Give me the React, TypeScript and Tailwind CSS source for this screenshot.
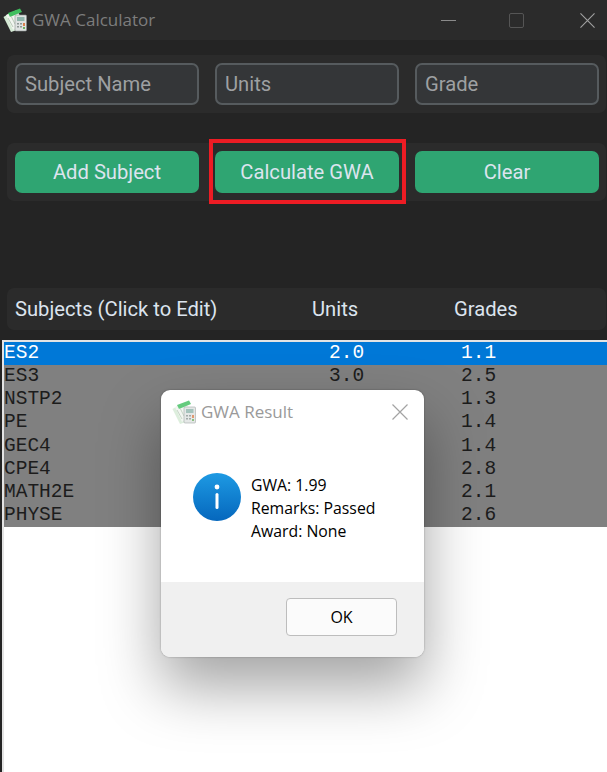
const ROWS = [
  { name: "ES2", units: "2.0", grade: "1.1" },
  { name: "ES3", units: "3.0", grade: "2.5" },
  { name: "NSTP2", units: "2.0", grade: "1.3" },
  { name: "PE", units: "2.0", grade: "1.4" },
  { name: "GEC4", units: "3.0", grade: "1.4" },
  { name: "CPE4", units: "3.0", grade: "2.8" },
  { name: "MATH2E", units: "3.0", grade: "2.1" },
  { name: "PHYSE", units: "4.0", grade: "2.6" },
];

function AppIcon({ className }: { className: string }) {
  return (
    <svg viewBox="0 0 24 24" className={className}>
      <path d="M0.5 9 L7 5 L14 22 L8 24 Z" fill="#d5ead5" />
      <path d="M3 7 L14 2 L20 14 L10 22 Z" fill="#f1f5f0" />
      <path d="M5 5 L17 0.5 L19 4 L7 9 Z" fill="#3fbf5f" />
      <path d="M5 10 L10 19 M8 8 L12 16" stroke="#b9cbb9" strokeWidth="1" />
      <rect x="12" y="7" width="11.5" height="16" rx="1" fill="#dfe3e2" stroke="#8d9694" strokeWidth="0.6" />
      <rect x="14" y="9" width="7.5" height="4" fill="#8fb5ac" />
      <rect x="14" y="15" width="2" height="1.5" fill="#8d9694" />
      <rect x="17" y="15" width="2" height="1.5" fill="#8d9694" />
      <rect x="20" y="15" width="2" height="3" fill="#d9824f" />
      <rect x="14" y="18" width="2" height="1.5" fill="#8d9694" />
      <rect x="17" y="18" width="2" height="1.5" fill="#8d9694" />
      <rect x="20" y="19" width="2" height="2" fill="#6fae62" />
    </svg>
  );
}

function CloseIcon({ className }: { className: string }) {
  return (
    <svg viewBox="0 0 16 16" className={className} fill="none" stroke="currentColor" strokeWidth="1.2">
      <path d="M0.5 0.5 L15.5 15.5 M15.5 0.5 L0.5 15.5" />
    </svg>
  );
}

function Field({ label }: { label: string }) {
  return (
    <div className="flex h-[42px] w-[184px] shrink-0 items-center rounded-[7px] border-2 border-[#565b5e] bg-[#343638] pl-2 font-['Roboto',sans-serif] text-[20.2px] text-[#9ea0a2]">
      {label}
    </div>
  );
}

function ActionButton({ label }: { label: string }) {
  return (
    <button className="h-[42px] w-[184px] shrink-0 rounded-[7px] bg-[#2fa572] font-['Roboto',sans-serif] text-[20.2px] text-[#dce4ee]">
      {label}
    </button>
  );
}

export default function App() {
  return (
    <div className="relative flex h-[772px] w-[607px] flex-col overflow-hidden bg-[#242424]">
      {/* Title bar */}
      <div className="flex h-10 shrink-0 items-center justify-between bg-[#2b2b2b]">
        <div className="flex items-center">
          <AppIcon className="ml-[3px] mr-[5px] h-6 w-6" />
          <span className="font-['Open_Sans',sans-serif] text-[17px] text-[#7d7d7d]">GWA Calculator</span>
        </div>
        <div className="flex items-center">
          <div className="mr-[53px] h-px w-[15px] bg-[#8a8a8a]" />
          <div className="mr-[56px] h-[15px] w-[15px] rounded-[2px] border border-[#555555]" />
          <CloseIcon className="mr-[12px] h-[15px] w-[15px] text-[#a0a0a0]" />
        </div>
      </div>

      <div className="ml-[7px] mr-px mt-[15px] flex gap-4 rounded-[7px] bg-[#2b2b2b] p-2">
        <Field label="Subject Name" />
        <Field label="Units" />
        <Field label="Grade" />
      </div>

      <div className="ml-[7px] mr-px mt-[30px] flex gap-4 rounded-[7px] bg-[#2b2b2b] p-2">
        <ActionButton label="Add Subject" />
        <ActionButton label="Calculate GWA" />
        <ActionButton label="Clear" />
      </div>

      <div className="ml-[7px] mr-px mt-[87px] flex h-[42px] items-center rounded-[7px] bg-[#2b2b2b] pl-2 font-['Roboto',sans-serif] text-[20.2px] text-[#dce4ee]">
        <span className="w-[297px]">Subjects (Click to Edit)</span>
        <span className="w-[142px]">Units</span>
        <span>Grades</span>
      </div>

      {/* Subject list */}
      <div className="ml-0.5 mt-[10px] flex-1 border-l-2 border-t-2 border-[#e3e3e3] bg-white">
        {ROWS.map((row, i) => (
          <div
            key={row.name}
            className={`flex h-[23.17px] items-center whitespace-pre font-['Liberation_Mono',monospace] text-[19.5px] ${
              i === 0 ? "bg-[#0078d7] text-white" : "bg-[#808080] text-[#1c1c1c]"
            }`}
          >
            <span className="w-[325px]">{row.name}</span>
            <span className="w-[132px]">{row.units}</span>
            <span>{row.grade}</span>
          </div>
        ))}
      </div>

      {/* Highlight around the Calculate GWA button */}
      <div className="absolute left-[209px] top-[139px] h-[65px] w-[197px] border-4 border-[#ed1c24]" />

      {/* Result dialog */}
      <div className="absolute left-[161px] top-[390px] flex h-[267px] w-[263px] flex-col overflow-hidden rounded-[9px] bg-white font-['Open_Sans',sans-serif] shadow-[0_0_2px_rgba(0,0,0,0.35),0_30px_60px_rgba(0,0,0,0.36)]">
        <div className="flex h-[43px] shrink-0 items-center justify-between">
          <div className="flex items-center">
            <AppIcon className="ml-[11px] mr-[5px] h-6 w-6 opacity-80" />
            <span className="text-[17px] text-[#9a9a9a]">GWA Result</span>
          </div>
          <CloseIcon className="mr-4 h-4 w-4 text-[#a3a3a3]" />
        </div>
        <div className="flex flex-1 items-start pl-8 pt-10">
          <svg viewBox="0 0 48 48" className="mr-[10px] h-12 w-12 shrink-0">
            <defs>
              <linearGradient id="info" x1="0" y1="0" x2="0" y2="1">
                <stop offset="0" stopColor="#1e9ae3" />
                <stop offset="1" stopColor="#0567bd" />
              </linearGradient>
            </defs>
            <circle cx="24" cy="24" r="24" fill="url(#info)" />
            <circle cx="24" cy="14" r="2.4" fill="#fff" />
            <rect x="22.5" y="20" width="3" height="16" rx="1.5" fill="#fff" />
          </svg>
          <div className="pt-px text-[15.8px] leading-[23px] text-black">
            <div>GWA: 1.99</div>
            <div>Remarks: Passed</div>
            <div>Award: None</div>
          </div>
        </div>
        <div className="flex h-[75px] shrink-0 items-start justify-end bg-[#f0f0f0] pr-[27px] pt-4">
          <button className="h-[38px] w-[111px] rounded-[4px] border border-[#bdbdbd] bg-[#fbfbfb] text-[16px] text-black">
            OK
          </button>
        </div>
      </div>
    </div>
  );
}
